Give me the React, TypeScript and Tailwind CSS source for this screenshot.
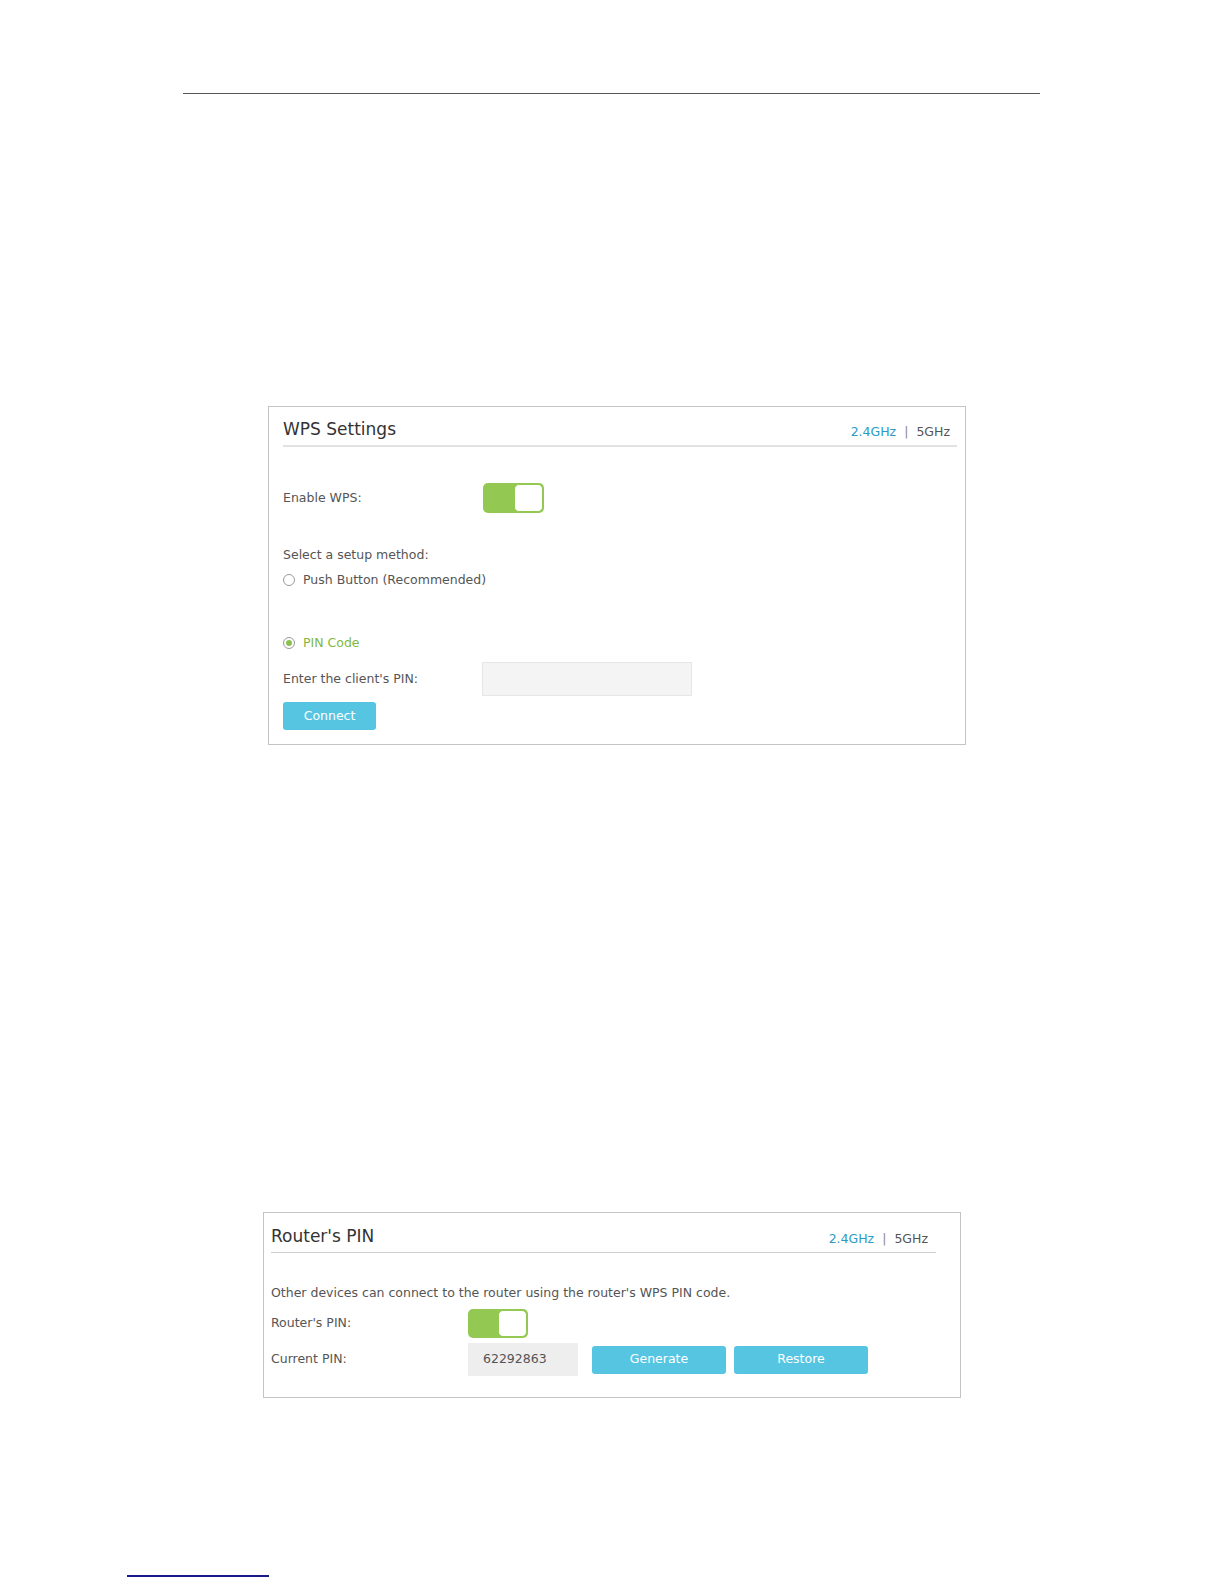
import React from 'react';

const font = { fontFamily: '"DejaVu Sans", Verdana, sans-serif' };

// green on/off switch, always "on" here
const Toggle: React.FC<{ small?: boolean }> = ({ small }) => (
  <div
    className={`flex items-center justify-end rounded-[5px] bg-[#93c953] p-[1px] ${
      small ? 'h-[29px] w-[60px]' : 'h-[30px] w-[61px]'
    }`}
  >
    <div className="h-full w-[29px] rounded-[5px] border border-[#93c953] bg-white" />
  </div>
);

const Radio: React.FC<{ checked?: boolean; label: string }> = ({ checked, label }) => (
  <div className="flex h-[18px] items-center gap-[8px]">
    <span className="flex h-[12px] w-[12px] items-center justify-center rounded-full border border-[#9a9a9a] bg-white">
      {checked && <span className="h-[6px] w-[6px] rounded-full bg-[#8cc152]" />}
    </span>
    <span className={checked ? 'text-[#7fb83f]' : 'text-[#555]'}>{label}</span>
  </div>
);

const BandSwitch: React.FC = () => (
  <div className="flex items-center gap-[8px] text-[12.5px]">
    <span className="text-[#2c9ac2]">2.4GHz</span>
    <span className="text-[#888]">|</span>
    <span className="text-[#555]">5GHz</span>
  </div>
);

const App: React.FC = () => {
  return (
    <div
      className="flex h-[1584px] w-[1224px] flex-col overflow-hidden bg-white pt-[93px] text-[12.5px] text-[#555]"
      style={font}
    >
      {/* page header rule */}
      <div className="ml-[183px] h-[1px] w-[857px] shrink-0 bg-[#555]" />

      {/* ---------- WPS Settings panel ---------- */}
      <div className="ml-[268px] mt-[312px] w-[698px] shrink-0 border border-[#c4c4c4] pb-[14px] pl-[14px] pr-[8px]">
        <div className="flex items-end justify-between border-b-2 border-[#e2e2e2] pb-[3px] pr-[7px] pt-[9px]">
          <span className="text-[17px] leading-[26px] text-[#333]">WPS Settings</span>
          <BandSwitch />
        </div>

        <div className="mt-[36px] flex h-[30px] items-center">
          <span className="w-[200px]">Enable WPS:</span>
          <Toggle />
        </div>

        <div className="mt-[33px] leading-[18px]">Select a setup method:</div>
        <div className="mt-[7px]">
          <Radio label="Push Button (Recommended)" />
        </div>
        <div className="mt-[45px]">
          <Radio checked label="PIN Code" />
        </div>

        <div className="mt-[10px] flex h-[34px] items-center">
          <span className="w-[199px]">Enter the client's PIN:</span>
          <div className="h-[34px] w-[210px] border border-[#e6e6e6] bg-[#f4f4f4]" />
        </div>

        <button className="mt-[6px] h-[28px] w-[93px] rounded-[3px] bg-[#56c5e2] text-[12.5px] text-white">
          Connect
        </button>
      </div>

      {/* ---------- Router's PIN panel ---------- */}
      <div className="ml-[263px] mt-[467px] w-[698px] shrink-0 border border-[#c4c4c4] pb-[21px] pl-[7px] pr-[24px]">
        <div className="flex items-end justify-between border-b border-[#cfcfcf] pb-[3px] pr-[8px] pt-[10px]">
          <span className="text-[17px] leading-[26px] text-[#333]">Router's PIN</span>
          <BandSwitch />
        </div>

        <div className="mt-[31px] leading-[18px]">
          Other devices can connect to the router using the router's WPS PIN code.
        </div>

        <div className="mt-[7px] flex h-[29px] items-center">
          <span className="w-[197px]">Router's PIN:</span>
          <Toggle small />
        </div>

        <div className="mt-[5px] flex h-[33px] items-center">
          <span className="w-[197px]">Current PIN:</span>
          <div className="flex h-[33px] w-[110px] items-center bg-[#eeeeee] pl-[15px] text-[#555]">62292863</div>
          <button className="ml-[14px] h-[28px] w-[134px] rounded-[3px] bg-[#56c5e2] text-[12.5px] text-white">
            Generate
          </button>
          <button className="ml-[8px] h-[28px] w-[134px] rounded-[3px] bg-[#56c5e2] text-[12.5px] text-white">
            Restore
          </button>
        </div>
      </div>

      {/* footer link underline */}
      <div className="ml-[127px] mt-[177px] h-[2px] w-[142px] shrink-0 bg-[#1a1a8c]" />
    </div>
  );
};

export default App;
